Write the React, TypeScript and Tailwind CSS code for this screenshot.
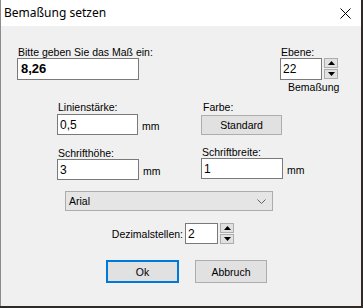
import React from 'react';

const Spin = ({ h = 'h-[10px]' }: { h?: string }) => (
  <div className="flex flex-col gap-[1px] ml-[2px]">
    {['up', 'down'].map(d => (
      <div key={d} className={`w-[14px] ${h} bg-[#e1e1e1] border border-[#adadad] flex items-center justify-center`}>
        <svg width="7" height="4" viewBox="0 0 7 4">
          {d === 'up' ? <polygon points="0,4 7,4 3.5,0" fill="#000" /> : <polygon points="0,0 7,0 3.5,4" fill="#000" />}
        </svg>
      </div>
    ))}
  </div>
);

const Field = ({ value, className = '' }: { value: string; className?: string }) => (
  <div className={`bg-white border border-[#7a7a7a] flex items-center pl-[2px] ${className}`}>{value}</div>
);

export default function App() {
  return (
    <div className="w-[363px] h-[308px] bg-[#2f2a27]" style={{ fontFamily: '"Liberation Sans", Arial, sans-serif' }}>
      <div className="w-[361px] h-[306px] bg-[#f0f0f0] border-l border-[#8c8c8c] flex flex-col text-[10.5px] leading-[12px] text-black whitespace-nowrap">
        <div className="h-[26px] bg-white flex items-center justify-between pl-[3px] pr-[10px] shrink-0">
          <span className="text-[12px]" style={{ fontFamily: '"Noto Sans", sans-serif' }}>Bemaßung setzen</span>
          <svg width="11" height="11" viewBox="0 0 11 11">
            <path d="M0.5 0.5 L10.5 10.5 M10.5 0.5 L0.5 10.5" stroke="#000" strokeWidth="1" />
          </svg>
        </div>

        <div className="flex items-start mt-[20px]">
          <div className="ml-[16px] w-[122px]">
            <div className="pl-[1px] h-[12px]">Bitte geben Sie das Maß ein:</div>
            <Field value="8,26" className="h-[22px] w-[122px] text-[13px] font-bold pl-[3px]" />
          </div>
          <div className="ml-[141px] flex flex-col">
            <div className="pl-[1px] h-[12px]">Ebene:</div>
            <div className="flex items-start">
              <Field value="22" className="h-[22px] w-[42px] text-[12px]" />
              <Spin />
            </div>
            <div className="pl-[8px] mt-[1px] h-[12px]">Bemaßung</div>
          </div>
        </div>

        <div className="flex items-start mt-[8px]">
          <div className="ml-[56px] w-[144px]">
            <div className="pl-[1px] h-[13px]">Linienstärke:</div>
            <div className="flex items-center">
              <Field value="0,5" className="h-[21px] w-[81px] text-[12px]" />
              <span className="ml-[4px] mt-[2px]">mm</span>
            </div>
          </div>
          <div>
            <div className="pl-[2px] h-[14px]">Farbe:</div>
            <div className="w-[81px] h-[20px] bg-[#e1e1e1] border border-[#adadad] flex items-center justify-center">Standard</div>
          </div>
        </div>

        <div className="flex items-start mt-[12px]">
          <div className="ml-[56px] w-[144px]">
            <div className="pl-[1px] h-[12px]">Schrifthöhe:</div>
            <div className="flex items-center">
              <Field value="3" className="h-[21px] w-[82px] text-[12px]" />
              <span className="ml-[4px] mt-[2px]">mm</span>
            </div>
          </div>
          <div className="-mt-[1px]">
            <div className="pl-[1px] h-[12px]">Schriftbreite:</div>
            <div className="flex items-center">
              <Field value="1" className="h-[21px] w-[82px] text-[12px]" />
              <span className="ml-[4px] mt-[2px]">mm</span>
            </div>
          </div>
        </div>

        <div className="ml-[64px] mt-[11px] w-[208px] h-[20px] bg-[#e5e5e5] border border-[#acacac] flex items-center justify-between pl-[3px] pr-[6px]">
          <span>Arial</span>
          <svg width="9" height="5" viewBox="0 0 9 5">
            <path d="M0.5 0.5 L4.5 4.5 L8.5 0.5" stroke="#606060" fill="none" strokeWidth="1" />
          </svg>
        </div>

        <div className="flex items-center mt-[12px]">
          <div className="ml-[63px] w-[121px] text-right pr-[2px]">Dezimalstellen:</div>
          <Field value="2" className="h-[21px] w-[33px] text-[12px]" />
          <Spin h="h-[10px]" />
        </div>

        <div className="flex ml-[105px] mt-[16px] gap-[16px]">
          <div className="w-[73px] h-[23px] bg-[#e1e1e1] border-2 border-[#0078d7] flex items-center justify-center">Ok</div>
          <div className="w-[72px] h-[23px] bg-[#e1e1e1] border border-[#adadad] flex items-center justify-center">Abbruch</div>
        </div>
      </div>
    </div>
  );
}
